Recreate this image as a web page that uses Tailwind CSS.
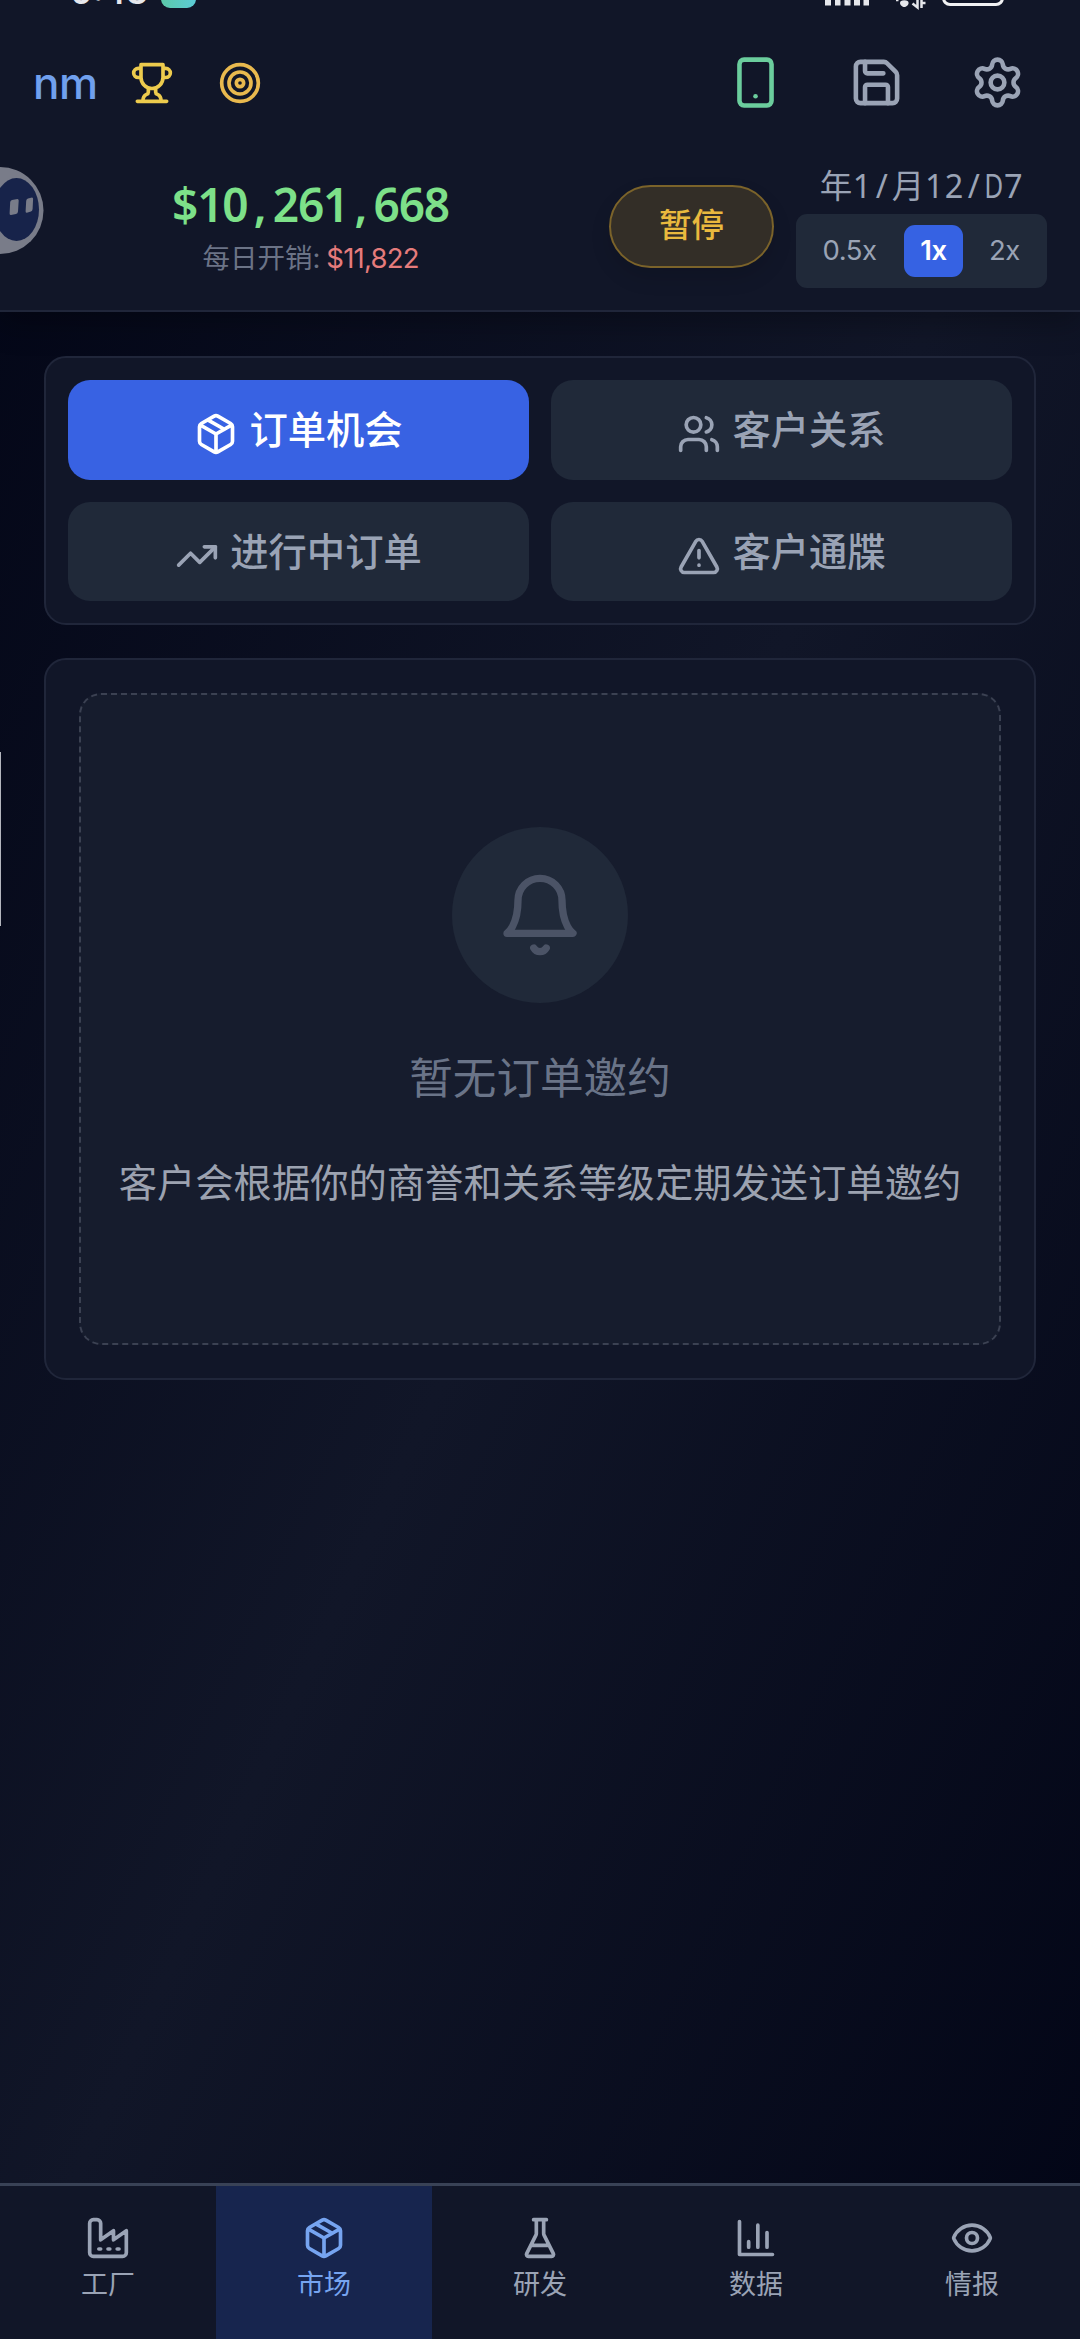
<!DOCTYPE html>
<html lang="zh-CN">
<head>
<meta charset="utf-8">
<title>nm</title>
<script src="https://cdn.jsdelivr.net/npm/@tailwindcss/browser@4"></script>
</head>
<body class="w-[1080px] h-[2339px] overflow-hidden font-['Inter','Noto_Sans_CJK_SC',sans-serif]">
<div class="relative flex h-[2339px] w-[1080px] flex-col overflow-hidden bg-linear-to-br/srgb from-[#020516] via-[#111628] to-[#020516] text-[#9aa3b5]">

  <!-- system status bar, scrolled half out of view -->
  <div class="absolute inset-x-0 top-0 z-20 h-3 overflow-hidden">
    <span class="absolute left-[71px] top-[-32px] text-[34px] leading-[48px] font-semibold text-[#e6e7ec]">9:43</span>
    <span class="absolute left-[161px] -top-[27px] h-[35px] w-[35px] rounded-[9px] bg-linear-to-r from-[#5cc9a8] to-[#5ccbd6]"></span>
    <svg class="absolute left-[820px] top-0 h-3 w-[190px]" viewBox="0 0 190 12" fill="none">
      <path d="M5 0h6v5.500h-6zM15 0h5.500v5.500h-5.500zM24.500 0h6v5.500h-6zM34 0h6v5.500h-6zM43.500 0h5.500v5.500h-5.500z" fill="#e6e7ec"/>
      <path d="M80 3a4.300 2.700 0 0 1 8.600 0c0 2-2.500 4-4.300 4s-4.300-2-4.300-4z" fill="#e6e7ec"/>
      <path d="M76 0h2.500M92.500 3.500l5 4V0M101.500 8V0M101.500 3h4" stroke="#e6e7ec" stroke-width="2.500"/>
      <path d="M123.500-8V-2a6.500 6.500 0 0 0 6.500 6.500H176a6.500 6.500 0 0 0 6.500-6.500V-8" stroke="#f1f1f3" stroke-width="3"/>
    </svg>
  </div>

  <header class="relative z-10 flex h-[312px] shrink-0 flex-col border-b-2 border-[#20263a] bg-[#111628] shadow-[0_10px_30px_rgba(0,0,0,0.3)]">
    <div class="mt-[55px] flex h-[55px] items-center pl-[33px] pr-[55px]">
      <span class="w-[97px] pt-px text-[44px] leading-[54px] font-medium tracking-[-0.500px] text-[#70a0ee]">nm</span>
      <svg class="size-11 text-[#edcb4d]" viewBox="0 0 24 24" fill="none" stroke="currentColor" stroke-width="2" stroke-linecap="round" stroke-linejoin="round"><path d="M6 9H4.500a2.500 2.500 0 0 1 0-5H6M18 9h1.500a2.500 2.500 0 0 0 0-5H18M4 22h16M10 14.660V17c0 .55-.47.980-.97 1.210C7.850 18.750 7 20.240 7 22M14 14.660V17c0 .55.47.980.97 1.210C16.150 18.750 17 20.240 17 22M18 2H6v7a6 6 0 0 0 12 0V2Z"/></svg>
      <svg class="ml-11 size-11 text-[#e9b94e]" viewBox="0 0 24 24" fill="none" stroke="currentColor" stroke-width="2"><circle cx="12" cy="12" r="10"/><circle cx="12" cy="12" r="6"/><circle cx="12" cy="12" r="2"/></svg>
      <div class="ml-auto flex gap-[66px]">
        <svg class="size-[55px] text-[#6bcd9d]" viewBox="0 0 24 24" fill="none" stroke="currentColor" stroke-width="2" stroke-linecap="round" stroke-linejoin="round"><rect width="14" height="20" x="5" y="2" rx="2"/><path d="M12 18h.01"/></svg>
        <svg class="size-[55px]" viewBox="0 0 24 24" fill="none" stroke="currentColor" stroke-width="2" stroke-linecap="round" stroke-linejoin="round"><path d="M15.200 3a2 2 0 0 1 1.400.6l3.800 3.800a2 2 0 0 1 .6 1.400V19a2 2 0 0 1-2 2H5a2 2 0 0 1-2-2V5a2 2 0 0 1 2-2z"/><path d="M17 21v-7a1 1 0 0 0-1-1H8a1 1 0 0 0-1 1v7M7 3v4a1 1 0 0 0 1 1h7"/></svg>
        <svg class="size-[55px]" viewBox="0 0 24 24" fill="none" stroke="currentColor" stroke-width="2" stroke-linecap="round" stroke-linejoin="round"><path d="M9.671 4.136a2.340 2.340 0 0 1 4.659 0 2.340 2.340 0 0 0 3.319 1.915 2.340 2.340 0 0 1 2.330 4.033 2.340 2.340 0 0 0 0 3.831 2.340 2.340 0 0 1-2.330 4.033 2.340 2.340 0 0 0-3.319 1.915 2.340 2.340 0 0 1-4.659 0 2.340 2.340 0 0 0-3.320-1.915 2.340 2.340 0 0 1-2.330-4.033 2.340 2.340 0 0 0 0-3.831A2.340 2.340 0 0 1 6.350 6.051a2.340 2.340 0 0 0 3.319-1.915"/><circle cx="12" cy="12" r="3"/></svg>
      </div>
    </div>

    <div class="mt-[52px] flex h-[126px] items-start">
      <div class="ml-[172px] mt-[12px] flex w-[277px] flex-col items-center">
        <div class="flex h-[60px] items-center font-['Noto_Sans'] text-[46px] leading-[60px] font-semibold text-[#7de089]">
          <span class="w-[25.200px] text-center">$</span><span class="w-[25.200px] text-center">1</span><span class="w-[25.200px] text-center">0</span><span class="w-[25.200px] text-center">,</span><span class="w-[25.200px] text-center">2</span><span class="w-[25.200px] text-center">6</span><span class="w-[25.200px] text-center">1</span><span class="w-[25.200px] text-center">,</span><span class="w-[25.200px] text-center">6</span><span class="w-[25.200px] text-center">6</span><span class="w-[25.200px] text-center">8</span>
        </div>
        <div class="mt-[6px] flex h-9 items-center text-[27.500px] leading-9 whitespace-nowrap text-[#6b7386]"><span>每日开销:</span><span class="ml-[6px] text-[#e57b7b] tracking-[-0.800px]">$11,822</span></div>
      </div>
      <div class="ml-[160px] mt-[23px] flex h-[83px] w-[165px] items-center justify-center rounded-full border-2 border-[#7b632a] bg-[#332e27] text-[32.500px] leading-none font-medium text-[#e9b93e] shadow-[0_10px_20px_rgba(0,0,0,0.12)]">暂停</div>
      <div class="ml-[22px] flex w-[251px] flex-col items-center">
        <div class="flex h-[48px] items-center font-['Noto_Sans','Noto_Sans_CJK_SC'] text-[32.500px] leading-[48px]">
          <span>年</span><span class="w-[19.800px] text-center">1</span><span class="w-[19.800px] text-center">/</span><span>月</span><span class="w-[19.800px] text-center">1</span><span class="w-[19.800px] text-center">2</span><span class="w-[19.800px] text-center">/</span><span class="flex w-[19.800px] justify-center"><span class="inline-block scale-x-80">D</span></span><span class="w-[19.800px] text-center">7</span>
        </div>
        <div class="mt-[4px] flex h-[74px] w-[251px] items-center gap-[11px] rounded-[11px] bg-[#202939] px-[10px] pb-px text-[27.500px] leading-none tracking-[-0.500px]">
          <span class="flex h-[52px] w-[87px] items-center justify-center">0.5x</span>
          <span class="flex h-[52px] w-[59px] items-center justify-center rounded-[11px] bg-[#3662e3] font-semibold text-white">1x</span>
          <span class="flex h-[52px] w-[61px] items-center justify-center">2x</span>
        </div>
      </div>
    </div>
    <!-- floating assistant bubble docked to the left edge -->
    <svg class="absolute left-0 top-[166px] h-[90px] w-[46px]" viewBox="0 0 46 90"><circle cx="0" cy="44.500" r="43.500" fill="#797c89"/><ellipse cx="16.500" cy="43.500" rx="22.500" ry="31.500" fill="#17234a"/><path d="M12 34l5.500-1q1.200 0 1.200 1.500l-.7 11q-.2 2-2 2.500l-5 1q-1.500 0-1.400-1.500l.6-11.500q.3-1.700 1.800-2zM28 32.500l4-1q1.200 0 1.100 1.500l-.5 10q-.2 2-1.700 2.500l-4 1.200q-1.400 0-1.300-1.500l.6-10.500q.3-1.700 1.800-2.200z" fill="#797c89"/></svg>
  </header>

  <div class="absolute left-0 top-[752px] h-[174px] w-px bg-[#b4b6be]"></div>

  <main class="flex flex-1 flex-col gap-[33px] px-11 pt-11">
    <section class="grid h-[269px] grid-cols-2 grid-rows-2 gap-[22px] rounded-[22px] border-2 border-[#20263a] bg-[#111628] p-[22px] text-[38.300px] leading-none font-medium">
      <div class="flex items-center justify-center gap-[11px] rounded-[22px] bg-[#3862e3] text-white">
        <svg class="mt-[9px] size-11" viewBox="0 0 24 24" fill="none" stroke="currentColor" stroke-width="2" stroke-linecap="round" stroke-linejoin="round"><path d="m7.500 4.270 9 5.150M21 8a2 2 0 0 0-1-1.730l-7-4a2 2 0 0 0-2 0l-7 4A2 2 0 0 0 3 8v8a2 2 0 0 0 1 1.730l7 4a2 2 0 0 0 2 0l7-4A2 2 0 0 0 21 16ZM3.300 7l8.700 5 8.700-5M12 22V12"/></svg>
        <span class="pt-px">订单机会</span>
      </div>
      <div class="flex items-center justify-center gap-[11px] rounded-[22px] bg-[#202939]">
        <svg class="mt-[9px] size-11" viewBox="0 0 24 24" fill="none" stroke="currentColor" stroke-width="2" stroke-linecap="round" stroke-linejoin="round"><path d="M16 21v-2a4 4 0 0 0-4-4H6a4 4 0 0 0-4 4v2"/><circle cx="9" cy="7" r="4"/><path d="M22 21v-2a4 4 0 0 0-3-3.870M16 3.130a4 4 0 0 1 0 7.750"/></svg>
        <span class="pt-px">客户关系</span>
      </div>
      <div class="flex items-center justify-center gap-[11px] rounded-[22px] bg-[#202939]">
        <svg class="mt-[9px] size-11" viewBox="0 0 24 24" fill="none" stroke="currentColor" stroke-width="2" stroke-linecap="round" stroke-linejoin="round"><path d="m22 7-8.500 8.500-5-5L2 17"/><path d="M16 7h6v6"/></svg>
        <span class="pt-px">进行中订单</span>
      </div>
      <div class="flex items-center justify-center gap-[11px] rounded-[22px] bg-[#202939]">
        <svg class="mt-[9px] size-11" viewBox="0 0 24 24" fill="none" stroke="currentColor" stroke-width="2" stroke-linecap="round" stroke-linejoin="round"><path d="m21.730 18-8-14a2 2 0 0 0-3.480 0l-8 14A2 2 0 0 0 4 21h16a2 2 0 0 0 1.730-3M12 9v4M12 17h.01"/></svg>
        <span class="pt-px">客户通牒</span>
      </div>
    </section>

    <section class="h-[722px] rounded-[22px] border-2 border-[#20263a] bg-[#111628] p-[33px]">
      <div class="flex h-full flex-col items-center rounded-[22px] border-2 border-dashed border-[#3b4152] bg-[#161c2d] pt-[132px]">
        <div class="flex size-44 items-center justify-center rounded-full bg-[#202939] text-[#4b5366]">
          <svg class="size-[88px]" viewBox="0 0 24 24" fill="none" stroke="currentColor" stroke-width="2" stroke-linecap="round" stroke-linejoin="round"><path d="M6 8a6 6 0 0 1 12 0c0 7 3 9 3 9H3s3-2 3-9M10.300 21a1.940 1.940 0 0 0 3.400 0"/></svg>
        </div>
        <p class="mt-[46px] text-[43.600px] leading-[60px] text-[#6a7488]">暂无订单邀约</p>
        <p class="mt-[47px] text-[38.300px] leading-[54px] whitespace-nowrap text-[#9ca2b0]">客户会根据你的商誉和关系等级定期发送订单邀约</p>
      </div>
    </section>
  </main>

  <nav class="grid h-[156px] shrink-0 grid-cols-5 border-t-3 border-[#394256] bg-[#111628] text-[27px] leading-[36px]">
    <div class="flex flex-col items-center gap-[7px] pt-[30px]">
      <svg class="size-11" viewBox="0 0 24 24" fill="none" stroke="currentColor" stroke-width="2" stroke-linecap="round" stroke-linejoin="round"><path d="M2 20a2 2 0 0 0 2 2h16a2 2 0 0 0 2-2V8l-7 5V8l-7 5V4a2 2 0 0 0-2-2H4a2 2 0 0 0-2 2ZM17 18h1M12 18h1M7 18h1"/></svg>
      <span>工厂</span>
    </div>
    <div class="flex flex-col items-center gap-[7px] bg-[#17254e] pt-[30px] text-[#76a4f0]">
      <svg class="size-11" viewBox="0 0 24 24" fill="none" stroke="currentColor" stroke-width="2" stroke-linecap="round" stroke-linejoin="round"><path d="m7.500 4.270 9 5.150M21 8a2 2 0 0 0-1-1.730l-7-4a2 2 0 0 0-2 0l-7 4A2 2 0 0 0 3 8v8a2 2 0 0 0 1 1.730l7 4a2 2 0 0 0 2 0l7-4A2 2 0 0 0 21 16ZM3.300 7l8.700 5 8.700-5M12 22V12"/></svg>
      <span>市场</span>
    </div>
    <div class="flex flex-col items-center gap-[7px] pt-[30px]">
      <svg class="size-11" viewBox="0 0 24 24" fill="none" stroke="currentColor" stroke-width="2" stroke-linecap="round" stroke-linejoin="round"><path d="M10 2v7.527a2 2 0 0 1-.211.896L4.720 20.550a1 1 0 0 0 .9 1.450h12.760a1 1 0 0 0 .9-1.450l-5.069-10.127A2 2 0 0 1 14 9.527V2M8.500 2h7M7 16h10"/></svg>
      <span>研发</span>
    </div>
    <div class="flex flex-col items-center gap-[7px] pt-[30px]">
      <svg class="size-11" viewBox="0 0 24 24" fill="none" stroke="currentColor" stroke-width="2" stroke-linecap="round" stroke-linejoin="round"><path d="M3 3v18h18M18 17V9M13 17V5M8 17v-3"/></svg>
      <span>数据</span>
    </div>
    <div class="flex flex-col items-center gap-[7px] pt-[30px]">
      <svg class="size-11" viewBox="0 0 24 24" fill="none" stroke="currentColor" stroke-width="2" stroke-linecap="round" stroke-linejoin="round"><path d="M2.062 12.348a1 1 0 0 1 0-.696 10.750 10.750 0 0 1 19.876 0 1 1 0 0 1 0 .696 10.750 10.750 0 0 1-19.876 0"/><circle cx="12" cy="12" r="3"/></svg>
      <span>情报</span>
    </div>
  </nav>
</div>
</body>
</html>
